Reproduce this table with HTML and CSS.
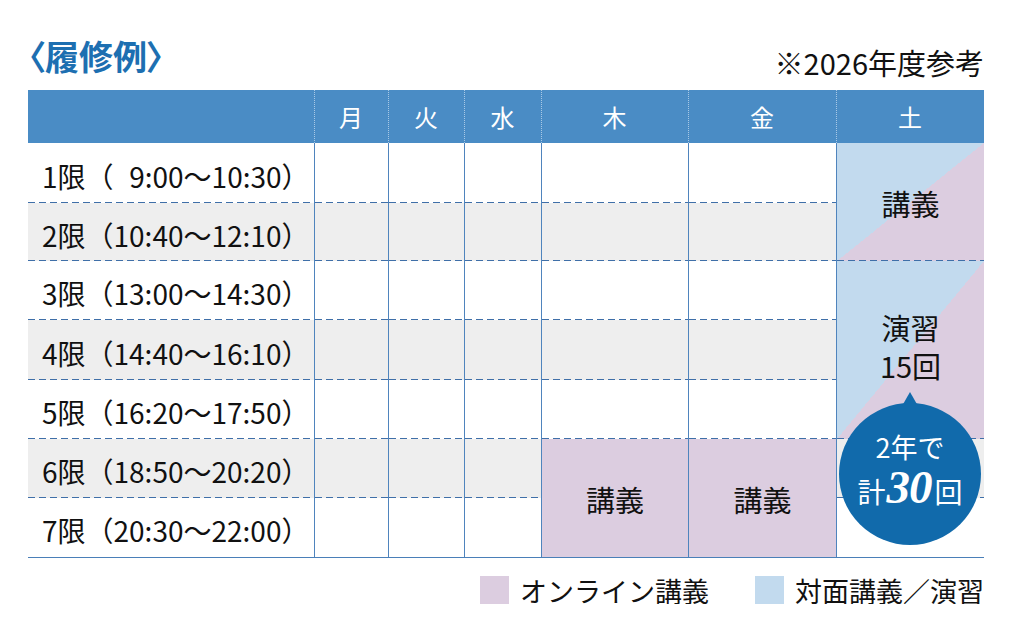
FILE: index.html
```html
<!DOCTYPE html>
<html lang="ja">
<head>
<meta charset="utf-8">
<title>履修例</title>
<link rel="stylesheet" href="styles.css">
</head>
<body>
<div class="page">
  <header class="head">
    <h1 class="title">〈履修例〉</h1>
    <p class="note">※2026年度参考</p>
  </header>

  <div class="tt">
    <div class="th"></div>
    <div class="th">月</div>
    <div class="th">火</div>
    <div class="th">水</div>
    <div class="th">木</div>
    <div class="th">金</div>
    <div class="th">土</div>

    <div class="c lbl">1限（<span class="fig"></span>9:00〜10:30）</div>
    <div class="c"></div><div class="c"></div><div class="c"></div><div class="c"></div><div class="c"></div>
    <div class="c face r2">講義</div>

    <div class="c lbl g">2限（10:40〜12:10）</div>
    <div class="c g"></div><div class="c g"></div><div class="c g"></div><div class="c g"></div><div class="c g"></div>

    <div class="c lbl">3限（13:00〜14:30）</div>
    <div class="c"></div><div class="c"></div><div class="c"></div><div class="c"></div><div class="c"></div>
    <div class="c face r3 stack"><span>演習</span><span>15回</span></div>

    <div class="c lbl g">4限（14:40〜16:10）</div>
    <div class="c g"></div><div class="c g"></div><div class="c g"></div><div class="c g"></div><div class="c g"></div>

    <div class="c lbl">5限（16:20〜17:50）</div>
    <div class="c"></div><div class="c"></div><div class="c"></div><div class="c"></div><div class="c"></div>

    <div class="c lbl g">6限（18:50〜20:20）</div>
    <div class="c g"></div><div class="c g"></div><div class="c g"></div>
    <div class="c on r2 last">講義</div>
    <div class="c on r2 last">講義</div>
    <div class="c g"></div>

    <div class="c lbl last">7限（20:30〜22:00）</div>
    <div class="c last"></div><div class="c last"></div><div class="c last"></div>
    <div class="c last"></div>

    <div class="badge">
      <span class="badge-l1">2年で</span>
      <span class="badge-l2">計<em class="big">30</em>回</span>
    </div>
  </div>

  <div class="legend">
    <div class="leg"><span class="sw sw-on"></span>オンライン講義</div>
    <div class="leg"><span class="sw sw-face"></span>対面講義／演習</div>
  </div>
</div>
</body>
</html>
```

FILE: styles.css
```css
html, body {
  margin: 0;
  padding: 0;
  background: #ffffff;
}

body {
  font-family: "Noto Sans CJK JP", "Noto Sans", sans-serif;
  color: #111111;
}

.page {
  width: 956px;
  margin-left: 28px;
}

.head {
  display: flex;
  justify-content: space-between;
  align-items: flex-start;
  height: 90px;
}

.title {
  margin: 39px 0 0 0;
  font-size: 34px;
  line-height: 1;
  font-weight: 700;
  color: #1d6fb1;
  font-feature-settings: "palt";
}

.note {
  margin: 48px 0 0 0;
  font-size: 29px;
  line-height: 1;
  font-weight: 400;
  color: #111111;
}

.tt {
  position: relative;
  display: grid;
  grid-template-columns: 286px 74px 76px 77px 147px 148px 148px;
  grid-template-rows: 53px 60px 58px 59px 60px 59px 59px 59px;
  border-bottom: 1px solid #4a7fb8;
}

.th {
  background: #4a8cc5;
  color: #ffffff;
  font-size: 24px;
  line-height: 1;
  display: flex;
  align-items: center;
  justify-content: center;
  background-image: repeating-linear-gradient(180deg, #a9c9e6 0 1px, transparent 1px 2px);
  background-size: 1px 100%;
  background-repeat: no-repeat;
  background-position: left top;
}

.th:first-child {
  background-image: none;
}

.c {
  box-sizing: border-box;
  border-left: 1px solid #4f84bd;
  display: flex;
  align-items: center;
  justify-content: center;
  font-size: 29px;
  line-height: 1;
  padding-top: 3px;
  background-color: #ffffff;
  background-image: repeating-linear-gradient(90deg, #3f6fa8 0 7px, transparent 7px 11px);
  background-size: 100% 1px;
  background-repeat: no-repeat;
  background-position: left bottom;
}

.c.lbl {
  border-left: 0;
  justify-content: flex-start;
  padding-left: 14px;
  font-size: 28px;
  padding-top: 5px;
}

.fig {
  display: inline-block;
  width: 0.56em;
}

.c.g {
  background-color: #eeeeee;
}

.c.on {
  background-color: #dccde0;
}

.c.face {
  background-image:
    repeating-linear-gradient(90deg, #3f6fa8 0 7px, transparent 7px 11px),
    linear-gradient(to bottom right, #c2daee 50%, #dccde0 50%);
  background-size: 100% 1px, 100% 100%;
  background-position: left bottom, left top;
  background-repeat: no-repeat, no-repeat;
}

.c.last {
  background-image: none;
}

.r2 {
  grid-row: span 2;
}

.r3 {
  grid-row: span 3;
}

.stack {
  flex-direction: column;
  justify-content: flex-start;
  padding-top: 52px;
  gap: 9px;
}

.badge {
  position: absolute;
  left: 811px;
  top: 313px;
  width: 142px;
  height: 142px;
  border-radius: 50%;
  background: #116aab;
  color: #ffffff;
  display: flex;
  flex-direction: column;
  align-items: center;
  justify-content: center;
  line-height: 1;
}

.badge::before {
  content: "";
  position: absolute;
  left: 63px;
  top: -11px;
  width: 0;
  height: 0;
  border-left: 8px solid transparent;
  border-right: 8px solid transparent;
  border-bottom: 14px solid #116aab;
}

.badge-l1 {
  font-size: 27px;
  margin-top: -4px;
}

.badge-l2 {
  font-size: 28px;
  margin-top: 4px;
  display: flex;
  align-items: baseline;
}

.big {
  font-family: "Liberation Serif", "DejaVu Serif", serif;
  font-style: italic;
  font-weight: 700;
  font-size: 47px;
  letter-spacing: -1px;
  margin: 0 3px 0 1px;
}

.legend {
  display: flex;
  justify-content: flex-end;
  gap: 46px;
  margin-top: 18px;
}

.leg {
  display: flex;
  align-items: center;
  gap: 11px;
  font-size: 27px;
  line-height: 1;
}

.sw {
  display: inline-block;
  width: 29px;
  height: 28px;
}

.sw-on {
  background: #dccde0;
}

.sw-face {
  background: #c2daee;
}
```
